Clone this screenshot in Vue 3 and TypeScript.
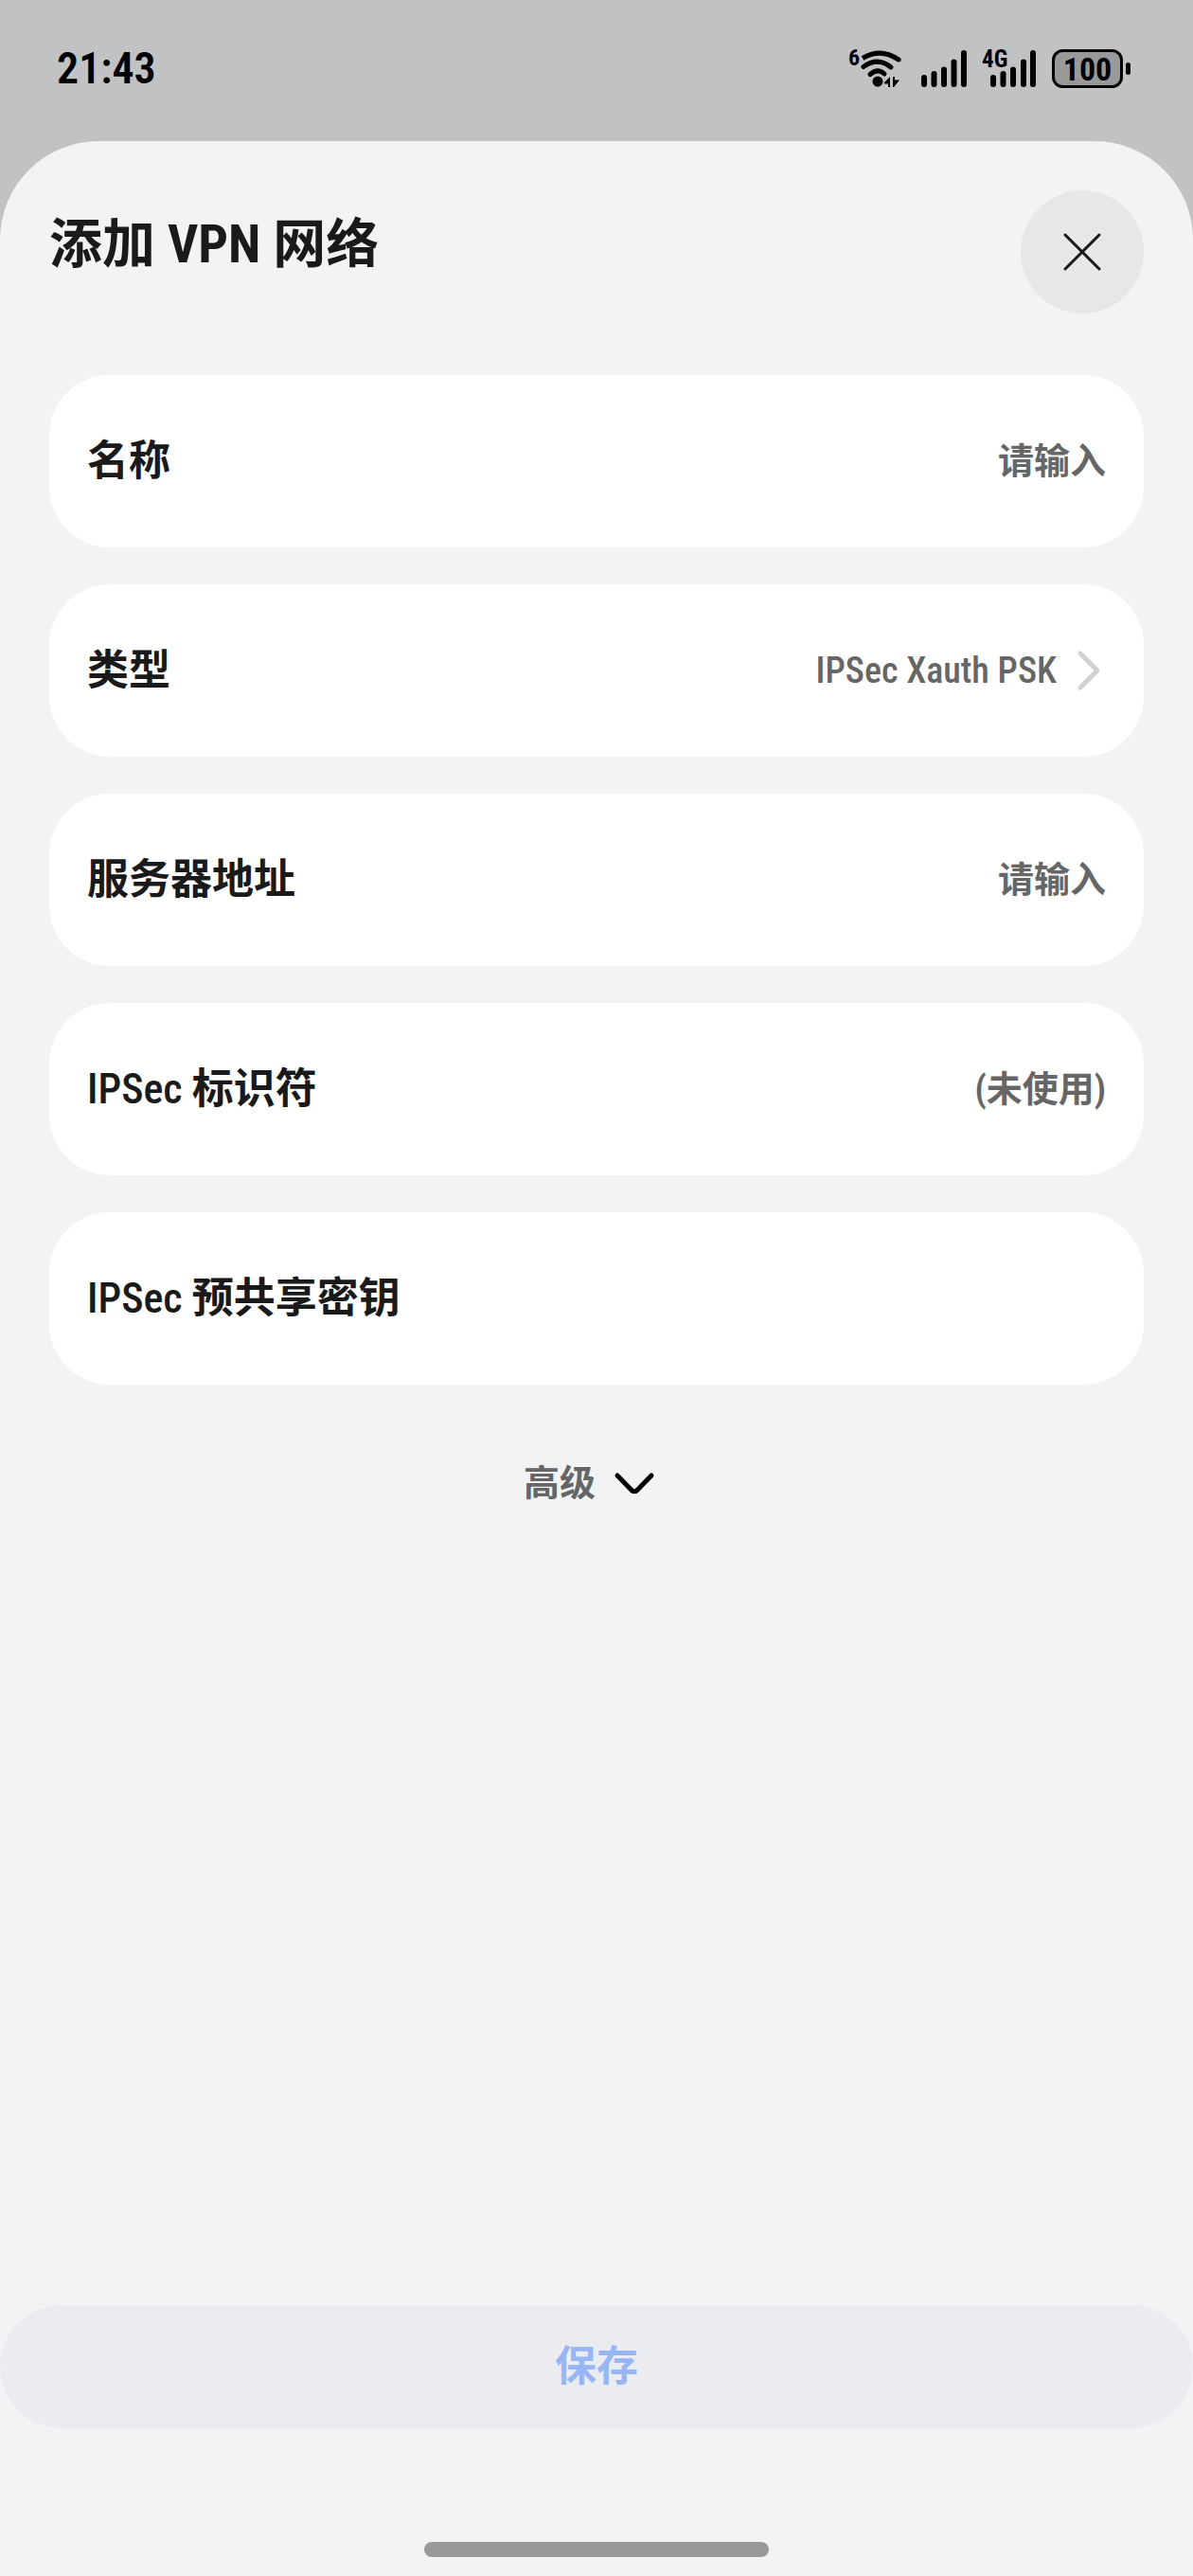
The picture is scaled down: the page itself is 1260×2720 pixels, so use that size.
<script setup lang="ts">
import { reactive, ref } from 'vue'

interface Field {
  id: 'name' | 'server' | 'identifier' | 'psk'
  prefix: string
  label: string
  placeholder: string
  type: 'text' | 'password'
}

const nameField: Field = { id: 'name', prefix: '', label: '名称', placeholder: '请输入', type: 'text' }

const ipsecFields: Field[] = [
  { id: 'server', prefix: '', label: '服务器地址', placeholder: '请输入', type: 'text' },
  { id: 'identifier', prefix: 'IPSec ', label: '标识符', placeholder: '(未使用)', type: 'text' },
  { id: 'psk', prefix: 'IPSec ', label: '预共享密钥', placeholder: '', type: 'password' },
]

const vpnTypes: string[] = ['IPSec Xauth PSK', 'IPSec Xauth RSA', 'IPSec Hybrid RSA']

const form = reactive({ name: '', server: '', identifier: '', psk: '' })
const vpnType = ref(vpnTypes[0])
</script>

<template>
  <div class="screen">
    <header class="status">
      <time class="clock">21:43</time>
      <div class="indicators">
        <svg width="62" height="44" viewBox="0 0 62 44">
          <text x="1" y="19" font-size="24">6</text>
          <g fill="none" stroke="currentColor" stroke-width="5">
            <path d="M16 11.500Q35 0 54 13" />
            <path d="M54 13h.1M17 20.500Q32 9.500 46 21M24 28.500Q32 21.500 39 28" stroke-linecap="round" />
          </g>
          <circle cx="32" cy="36" r="5.500" fill="currentColor" />
          <path d="M39 37L45 31V42H43V38.500H39ZM48 31H50V34.500H55L49 42H48Z" fill="currentColor" />
        </svg>
        <svg width="47" height="44" viewBox="0 0 47 44">
          <path class="bars" d="M3 32v7M13.500 28v11M24 23.500v15.500M34.500 15.500v23.500M45 6v33" />
        </svg>
        <svg width="58" height="44" viewBox="0 0 58 44">
          <path class="bars" d="M13 32v7M23.500 28v11M34 23.500v15.500M45 15.500v23.500M55 6v33" />
          <text x="1" y="21" font-size="25">4G</text>
        </svg>
        <svg width="85" height="44" viewBox="0 0 85 44">
          <rect x="2.500" y="3.500" width="72" height="38" rx="10" fill="#999" stroke="currentColor" stroke-width="3" />
          <rect x="79" y="16" width="5" height="13" rx="2.500" fill="currentColor" />
          <text x="38.500" y="35" font-size="34" text-anchor="middle">100</text>
        </svg>
      </div>
    </header>

    <main class="sheet">
      <div class="sheet-head">
        <h1>添加 VPN 网络</h1>
        <button class="close" type="button" aria-label="关闭">
          <svg width="40" height="40" viewBox="0 0 40 40">
            <path d="M2 2L38 38M38 2L2 38" fill="none" stroke="currentColor" stroke-width="3" stroke-linecap="round" />
          </svg>
        </button>
      </div>

      <form class="form" @submit.prevent>
        <div class="fields">
          <div class="card">
            <label :for="nameField.id">{{ nameField.label }}</label>
            <input :id="nameField.id" v-model="form.name" :type="nameField.type" :placeholder="nameField.placeholder" />
          </div>

          <div class="card">
            <label for="type">类型</label>
            <select id="type" v-model="vpnType">
              <option v-for="t in vpnTypes" :key="t" :value="t">{{ t }}</option>
            </select>
            <svg class="arrow" width="30" height="44" viewBox="0 0 30 44">
              <path d="M3 4L21 22L3 40" fill="none" stroke="currentColor" stroke-width="5" stroke-linecap="round" stroke-linejoin="round" />
            </svg>
          </div>

          <div v-for="f in ipsecFields" :key="f.id" class="card">
            <label :for="f.id"><span v-if="f.prefix" class="prefix">{{ f.prefix }}</span>{{ f.label }}</label>
            <input :id="f.id" v-model="form[f.id]" :type="f.type" :placeholder="f.placeholder" />
          </div>
        </div>

        <button class="advanced" type="button">
          高级
          <svg width="42" height="24" viewBox="0 0 42 24">
            <path d="M3 4L18 19.500Q21 22 24 19.500L39 4" fill="none" stroke="#000" stroke-width="5" stroke-linecap="round" />
          </svg>
        </button>

        <button class="save" type="submit" disabled>保存</button>
      </form>

      <div class="home-bar"></div>
    </main>
  </div>
</template>

<style>
body {
  margin: 0;
  background: #c1c2c4;
}
</style>

<style scoped>
.screen {
  display: flex;
  flex-direction: column;
  min-height: 100vh;
  color: #1a1a1a;
  font-family: "Roboto Condensed", Lato, "Noto Sans CJK SC", sans-serif;
}

button,
input,
select {
  margin: 0;
  padding: 0;
  border: 0;
  background: none;
  font-family: inherit;
}

svg {
  display: block;
  flex: none;
  overflow: visible;
}

.status {
  display: flex;
  justify-content: space-between;
  align-items: flex-start;
  box-sizing: border-box;
  height: 149px;
  padding: 50px 65px 0 60px;
  color: #000;
}

.clock {
  font-size: 46px;
  line-height: 44px;
  font-weight: 600;
}

.indicators {
  display: flex;
  gap: 16px;
}

.indicators text {
  font-weight: 700;
  fill: currentColor;
}

.bars {
  fill: none;
  stroke: currentColor;
  stroke-width: 6;
  stroke-linecap: round;
}

.sheet {
  display: flex;
  flex: 1;
  flex-direction: column;
  border-radius: 104px 104px 0 0;
  background: #f1f3f5;
}

.sheet-head {
  display: flex;
  justify-content: space-between;
  align-items: flex-start;
  padding: 52px 52px 65px;
}

h1 {
  margin: 0;
  padding-top: 22px;
  font-size: 56px;
  line-height: 70px;
  font-weight: 700;
}

.close {
  display: flex;
  justify-content: center;
  align-items: center;
  width: 130px;
  height: 130px;
  border-radius: 50%;
  background: #e6e7e9;
  color: #1a1a1a;
}

.form {
  display: flex;
  flex: 1;
  flex-direction: column;
}

.fields {
  display: flex;
  flex-direction: column;
  gap: 39px;
  padding: 0 52px;
}

.card {
  display: flex;
  align-items: center;
  box-sizing: border-box;
  height: 182px;
  padding: 0 40px;
  border-radius: 64px;
  background: #fff;
}

.card label {
  flex: none;
  font-size: 44px;
  line-height: 64px;
  font-weight: 700;
}

.prefix {
  font-weight: 500;
  white-space: pre;
}

.card input,
.card select {
  flex: 1;
  min-width: 0;
  height: 64px;
  color: #666;
  font-size: 38px;
  font-weight: 700;
  text-align: right;
  outline: none;
}

.card select {
  appearance: none;
  font-weight: 500;
  text-align-last: right;
}

.card input::placeholder {
  color: #666;
  opacity: 1;
}

.arrow {
  margin-left: 22px;
  color: #d1d1d1;
}

.advanced {
  display: flex;
  align-items: center;
  align-self: center;
  gap: 20px;
  margin-top: 72px;
  padding-right: 16px;
  color: #666;
  font-size: 38px;
  line-height: 64px;
  font-weight: 700;
}

.save {
  height: 130px;
  margin-top: auto;
  padding-bottom: 8px;
  border-radius: 65px;
  background: #ebecf0;
  color: #98b5f5;
  font-size: 44px;
  font-weight: 700;
}

.home-bar {
  align-self: center;
  width: 364px;
  height: 16px;
  margin: 120px 0 20px;
  border-radius: 8px;
  background: #999;
}
</style>
